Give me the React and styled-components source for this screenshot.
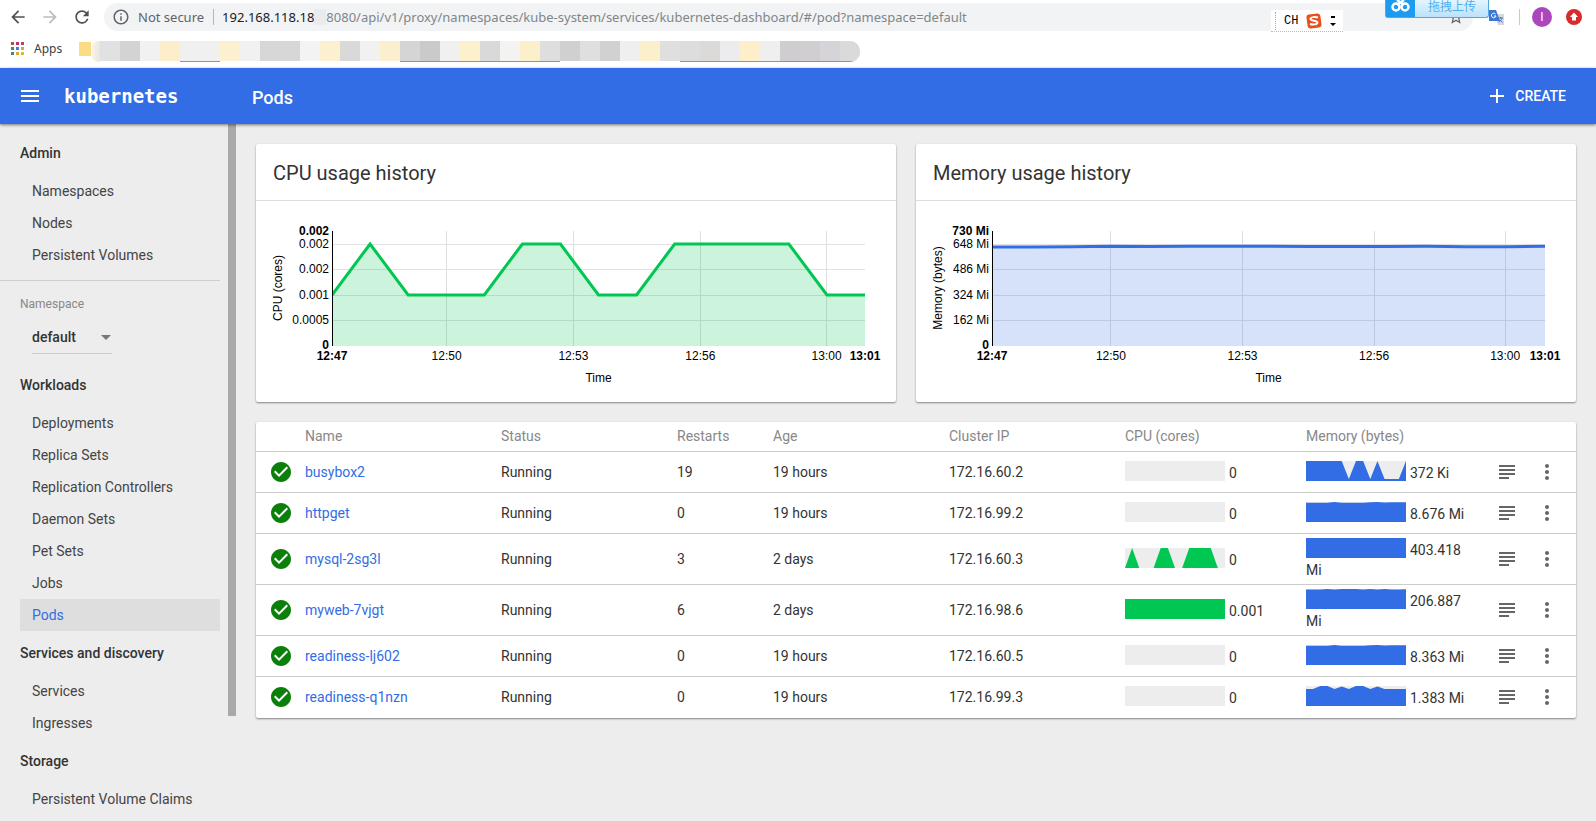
import styled, { createGlobalStyle } from "styled-components";
import {
  MdArrowBack,
  MdArrowForward,
  MdRefresh,
  MdInfoOutline,
  MdStarBorder,
  MdMenu,
  MdAdd,
  MdCheckCircle,
  MdSubject,
  MdMoreVert,
  MdArrowDropDown,
} from "react-icons/md";

/* ================= DATA ================= */
const NAV_ADMIN = ["Namespaces", "Nodes", "Persistent Volumes"];

const NAV_GROUPS = [
  {
    title: "Workloads",
    items: ["Deployments", "Replica Sets", "Replication Controllers", "Daemon Sets", "Pet Sets", "Jobs", "Pods"],
  },
  { title: "Services and discovery", items: ["Services", "Ingresses"] },
  { title: "Storage", items: ["Persistent Volume Claims"] },
];

const X_TICKS = [
  { label: "12:50", at: 21.5 },
  { label: "12:53", at: 45.3 },
  { label: "12:56", at: 69.1 },
  { label: "13:00", at: 92.8 },
];

const CPU_CHART = {
  title: "CPU usage history",
  axis: "CPU (cores)",
  color: "#00c752",
  max: "0.002",
  ticks: ["0.002", "0.002", "0.001", "0.0005"],
  values: [51, 102, 51, 51, 51, 102, 102, 51, 51, 102, 102, 102, 102, 51, 51],
};

const MEM_CHART = {
  title: "Memory usage history",
  axis: "Memory (bytes)",
  color: "#326de6",
  max: "730 Mi",
  ticks: ["648 Mi", "486 Mi", "324 Mi", "162 Mi"],
  values: [99, 99, 99.2, 99.8, 99.4, 99.8, 99.8, 99.8, 99.4, 99.6, 99.4, 99.7, 99.2, 99.2, 99.8],
};

const FULL = Array(15).fill(20);
const NONE = Array(15).fill(0);
const FLAT = [19.3, 19.3, 19.3, 19.3, 20, 19.3, 19.3, 19.3, 19.3, 19.8, 20, 19.6, 19.8, 19.8, 19.8];

const PODS = [
  { name: "busybox2", restarts: 19, age: "19 hours", ip: "172.16.60.2", cpu: "0", cpuLine: NONE, mem: "372 Ki", memLine: [20, 20, 20, 20, 20, 20, 2, 20, 20, 2, 20, 2, 2, 2, 20] },
  { name: "httpget", restarts: 0, age: "19 hours", ip: "172.16.99.2", cpu: "0", cpuLine: NONE, mem: "8.676 Mi", memLine: FLAT },
  { name: "mysql-2sg3l", restarts: 3, age: "2 days", ip: "172.16.60.3", cpu: "0", cpuLine: [0, 20, 0, 0, 0, 20, 20, 0, 0, 20, 20, 20, 20, 0, 0], mem: "403.418 Mi", memLine: FULL },
  { name: "myweb-7vjgt", restarts: 6, age: "2 days", ip: "172.16.98.6", cpu: "0.001", cpuLine: FULL, mem: "206.887 Mi", memLine: [19.6, 19.6, 19.6, 20, 19.6, 20, 20, 20, 19.6, 20, 19.6, 20, 19.6, 19.6, 19.8] },
  { name: "readiness-lj602", restarts: 0, age: "19 hours", ip: "172.16.60.5", cpu: "0", cpuLine: NONE, mem: "8.363 Mi", memLine: FLAT },
  { name: "readiness-q1nzn", restarts: 0, age: "19 hours", ip: "172.16.99.3", cpu: "0", cpuLine: NONE, mem: "1.383 Mi", memLine: [17, 17, 20, 20, 17, 19.5, 17, 20, 20, 17, 19.5, 17, 17, 17, 17] },
];

const COLUMNS = [49, 196, 176, 96, 176, 176, 181, 181, 40, 49];

const MOSAIC = [
  "#e2e1e2", "#d3d3d4", "#f1f1f1", "#fdeecb", "#f0f0f0", "#f0f0f0", "#fdf0d0", "#f1f1f1", "#d7d7d8", "#d7d7d8",
  "#f3f3f3", "#fdf0d0", "#d9d9da", "#f1f1f1", "#fcefd0", "#d6d5d6", "#cacacb", "#f0f0f0", "#fcf1cc", "#d9d9da",
  "#f3f3f1", "#fcf0cc", "#dedede", "#d0d0d0", "#e0dfe0", "#d1d1d1", "#efeff0", "#fcefcb", "#dfdfe0", "#dddddd",
  "#dcd9d9", "#ececee", "#fcefca", "#efeff0", "#cfcdcf", "#d0ced0", "#d6d4d8", "#dadadb",
];

/* ================= STYLES ================= */
const GlobalStyle = createGlobalStyle`
  * { box-sizing: border-box; }
  body { margin: 0; background: #ededed; overflow: hidden; }
  button { font: inherit; color: inherit; background: none; border: 0; padding: 0; cursor: pointer; }
`;

const Page = styled.div`
  height: 100vh;
  display: flex;
  flex-direction: column;
  font-family: Roboto, "Liberation Sans", sans-serif;
  font-size: 14px;
  line-height: 20px;
  color: #333;
`;

/* browser */
const Browser = styled.header`
  position: relative;
  flex: none;
  height: 68px;
  background: #fff;
  font-family: "Noto Sans", "Noto Sans CJK SC", sans-serif;
  font-size: 13px;
  color: #5f6368;
`;

const AddressRow = styled.div`
  display: flex;
  align-items: center;
  height: 34px;
  padding: 0 14px 0 8px;
`;

const NavButton = styled.button`
  display: flex;
  width: 32px;
  color: ${p => (p.$muted ? "#babcbe" : "#4d5156")};
`;

const Omnibox = styled.label`
  flex: 1;
  display: flex;
  align-items: center;
  gap: 8px;
  height: 28px;
  padding: 0 8px;
  border-radius: 14px;
  background: #f1f3f4;
`;

const Security = styled.span`
  padding-right: 9px;
  border-right: 1px solid #b4b7ba;
  line-height: 16px;
`;

const Url = styled.div`
  flex: 1;
  display: flex;
  align-items: center;
`;

const Host = styled.span`
  color: #202124;
`;

const Smudge = styled.span`
  width: 12px;
  height: 16px;
  background: #e9ebec;
`;

const UrlInput = styled.input`
  flex: 1;
  border: 0;
  outline: 0;
  padding: 0;
  background: none;
  font: inherit;
  color: #80868b;
`;

const Extensions = styled.div`
  display: flex;
  align-items: center;
  margin-left: 16px;
`;

const Separator = styled.span`
  width: 1px;
  height: 16px;
  margin: 0 12px 0 14px;
  background: #c8cacc;
`;

const Avatar = styled.span`
  width: 20px;
  height: 20px;
  margin-right: 14px;
  border-radius: 50%;
  background: #ab47bc;
  color: #fff;
  font-family: Roboto, sans-serif;
  font-size: 12px;
  line-height: 20px;
  text-align: center;
`;

const Bookmarks = styled.div`
  display: flex;
  align-items: center;
  height: 30px;
  padding-left: 11px;
  font-size: 12px;
  color: #3c4043;
`;

const AppsLink = styled.a`
  display: flex;
  align-items: center;
  gap: 9px;
  margin-right: 17px;
  color: inherit;
  text-decoration: none;
`;

const Folder = styled.span`
  width: 12px;
  height: 14px;
  background: #fbdc84;
`;

const Mosaic = styled.div`
  display: flex;
  height: 21px;
  margin-top: 4px;
  border-radius: 8px 10px 10px 8px;
  overflow: hidden;
  background: linear-gradient(90deg, #fdf6e2, #e2e1e2 12px);
  padding-left: 9px;
`;

const Tile = styled.span`
  width: 20px;
  background: ${p => p.$color};
  border-bottom: 1px solid ${p => (p.$line ? "#7f8fe0" : "#fff")};
`;

const ImeBar = styled.div`
  position: absolute;
  top: 10px;
  right: 253px;
  display: flex;
  align-items: center;
  gap: 8px;
  width: 72px;
  height: 22px;
  padding-left: 8px;
  background: #fff;
  border-bottom: 1px dotted #bbb;
  color: #000;
  font: 12px/20px "Liberation Mono", monospace;

  &::before {
    content: "";
    height: 18px;
    margin-left: -4px;
    border-left: 1px dotted #aaa;
  }
`;

const UploadTag = styled.div`
  position: absolute;
  top: 0;
  right: 107px;
  display: flex;
  width: 104px;
  height: 18px;
  border: 1px solid #4ea9e4;
  border-top: 0;
  border-radius: 0 0 3px 3px;
  background: linear-gradient(#e4f5ff, #b9e2fb);
  color: #4fb0ee;
  font-size: 12px;
  line-height: 14px;
`;

const UploadLogo = styled.span`
  width: 29px;
  height: 17px;
  margin-right: 13px;
  background: #1c9bf0;
`;

/* dashboard */
const AppBar = styled.header`
  position: relative;
  flex: none;
  display: flex;
  align-items: center;
  height: 56px;
  padding: 0 30px 0 18px;
  background: #326de6;
  box-shadow: 0 1px 3px rgba(0, 0, 0, 0.5);
  color: #fff;
`;

const Logo = styled.span`
  width: 188px;
  margin-left: 22px;
  font-family: "DejaVu Sans Mono", monospace;
  font-size: 19px;
  font-weight: 700;
`;

const PageTitle = styled.h1`
  flex: 1;
  margin: 0;
  padding-top: 3px;
  font-size: 18px;
  font-weight: 500;
`;

const BarButton = styled.button`
  display: flex;
  align-items: center;
  gap: 6px;
  font-weight: 500;
  text-transform: uppercase;
`;

const Body = styled.div`
  flex: 1;
  min-height: 0;
  display: flex;
`;

const Sidebar = styled.nav`
  flex: none;
  width: 228px;
  padding: 7px 8px 0 0;
  overflow: hidden;
`;

const ScrollThumb = styled.div`
  flex: none;
  width: 8px;
  height: 85%;
  background: #a9a9a9;
`;

const NavTitle = styled.h2`
  margin: 0;
  padding: 12px 20px;
  font-size: 14px;
  line-height: 20px;
  font-weight: 500;
`;

const NavItem = styled.a`
  display: block;
  margin-left: 20px;
  padding: 6px 12px;
  text-decoration: none;
  background: ${p => (p.$active ? "#dedede" : "transparent")};
  color: ${p => (p.$active ? "#326de6" : "#444")};
`;

const NamespaceBox = styled.div`
  display: flex;
  flex-direction: column;
  align-items: flex-start;
  gap: 8px;
  margin-top: 9px;
  padding: 15px 20px 9px;
  border-top: 1px solid #cfcfcf;
`;

const NamespaceLabel = styled.label`
  font-size: 12px;
  line-height: 16px;
  color: #888;
`;

const SelectWrap = styled.div`
  display: flex;
  align-items: center;
  width: 80px;
  height: 34px;
  margin-left: 12px;
  border-bottom: 1px solid #ccc;
  color: #777;

  select {
    flex: 1;
    min-width: 0;
    padding: 0;
    border: 0;
    outline: 0;
    background: none;
    appearance: none;
    font: 500 14px/20px Roboto, sans-serif;
    color: #333;
  }

  svg { flex: none; margin-right: -6px; }
`;

const Main = styled.main`
  flex: 1;
  min-width: 0;
  display: flex;
  flex-direction: column;
  gap: 20px;
  padding: 20px;
`;

const Charts = styled.div`
  display: grid;
  grid-template-columns: 32fr 33fr;
  gap: 20px;
`;

const Card = styled.section`
  min-width: 0;
  background: #fff;
  border-radius: 2px;
  box-shadow: 0 1px 2px rgba(0, 0, 0, 0.45);
`;

const CardTitle = styled.h3`
  margin: 0;
  padding: 17px 17px 15px;
  border-bottom: 1px solid #ddd;
  font-size: 20px;
  line-height: 24px;
  font-weight: 400;
`;

const Plot = styled.div`
  height: 201px;
  padding: 30px 31px 0 76px;

  > svg {
    display: block;
    width: 100%;
    height: 115px;
    overflow: visible;
    font: 12px "Liberation Sans", Arial, sans-serif;
    fill: #000;
  }
`;

const PodTable = styled.table`
  width: 100%;
  table-layout: fixed;
  border-collapse: separate;
  border-spacing: 0;

  th {
    height: 30px;
    padding: 0 0 1px;
    border-bottom: 1px solid #ccc;
    text-align: left;
    font-weight: 400;
    color: #888;
  }

  td {
    height: 41px;
    padding: 4px 8px 4px 0;
    border-bottom: 1px solid #ccc;
  }

  tr:last-child td { border-bottom-color: transparent; }
  svg { vertical-align: text-bottom; }
`;

const Col = styled.col`
  width: ${p => p.$width}px;
`;

const IconCell = styled.td`
  && { padding: 0 0 0 ${p => p.$left || 0}px; }
  color: ${p => p.$color || "#666"};
  line-height: 0;

  && svg { vertical-align: middle; }
`;

const PodLink = styled.a`
  color: #326de6;
  text-decoration: none;
`;

const SparkSvg = styled.svg`
  width: 100px;
  height: 20px;
  margin-right: 4px;
  background: #ededed;
`;

/* ================= COMPONENTS ================= */
const toPoints = (values, height) => values.map((v, i) => `${i},${height - v}`).join(" ");

function Sparkline({ values, color }) {
  return (
    <SparkSvg viewBox="0 0 14 20" preserveAspectRatio="none" aria-hidden="true">
      <polygon points={`0,20 ${toPoints(values, 20)} 14,20`} fill={color} />
    </SparkSvg>
  );
}

function HistoryChart({ chart }) {
  const line = toPoints(chart.values, 115);
  return (
    <Card>
      <CardTitle>{chart.title}</CardTitle>
      <Plot>
        <svg role="img" aria-label={chart.title}>
          {chart.ticks.map((t, i) => {
            const y = [13, 38, 64, 89][i];
            return (
              <g key={i}>
                <line x1="0" x2="100%" y1={y} y2={y} stroke="#e2e2e2" shapeRendering="crispEdges" />
                <text x="-3" y={y + 4} textAnchor="end">{t}</text>
              </g>
            );
          })}
          {X_TICKS.map(t => (
            <g key={t.label}>
              <line x1={`${t.at}%`} x2={`${t.at}%`} y1="0" y2="115" stroke="#dfdfdf" shapeRendering="crispEdges" />
              <text x={`${t.at}%`} y="129" textAnchor="middle">{t.label}</text>
            </g>
          ))}
          <svg width="100%" height="115" viewBox="0 0 14 115" preserveAspectRatio="none">
            <polygon points={`0,115 ${line} 14,115`} fill={chart.color} fillOpacity="0.2" />
            <polyline points={line} fill="none" stroke={chart.color} strokeWidth="3" vectorEffect="non-scaling-stroke" />
          </svg>
          <line x1="0" x2="0" y1="0" y2="115" stroke="#000" shapeRendering="crispEdges" />
          <g fontWeight="700">
            <text x="-3" y="4" textAnchor="end">{chart.max}</text>
            <text x="-3" y="118" textAnchor="end">0</text>
            <text x="0" y="129" textAnchor="middle">12:47</text>
            <text x="100%" y="129" textAnchor="middle">13:01</text>
          </g>
          <text x="50%" y="151" textAnchor="middle">Time</text>
          <text transform="translate(-50 57) rotate(-90)" textAnchor="middle">{chart.axis}</text>
        </svg>
      </Plot>
    </Card>
  );
}

function BrowserChrome() {
  return (
    <Browser>
      <AddressRow>
        <NavButton aria-label="Back"><MdArrowBack size={20} /></NavButton>
        <NavButton aria-label="Forward" $muted><MdArrowForward size={20} /></NavButton>
        <NavButton aria-label="Reload"><MdRefresh size={20} /></NavButton>
        <Omnibox>
          <MdInfoOutline size={18} />
          <Security>Not secure</Security>
          <Url>
            <Host>192.168.118.18</Host>
            <Smudge />
            <UrlInput
              aria-label="Address"
              defaultValue="8080/api/v1/proxy/namespaces/kube-system/services/kubernetes-dashboard/#/pod?namespace=default"
            />
          </Url>
          <MdStarBorder size={18} />
        </Omnibox>
        <Extensions>
          <svg width="16" height="16" viewBox="0 0 16 16">
            <path d="M6 5h9v11H9z" fill="#d5d8dc" />
            <path d="M9 9h5M11.500 8v1M13 9c-.5 2-2 3.500-3.500 4M10.500 10.500l3 3" fill="none" stroke="#4c74b8" />
            <path d="M0 1h7l4 11H0z" fill="#3f76d4" />
            <path d="M6.500 5A2.300 2.300 0 1 0 7 7H5" fill="none" stroke="#fff" strokeWidth="1" />
          </svg>
          <Separator />
          <Avatar>I</Avatar>
          <svg width="16" height="16" viewBox="0 0 16 16">
            <circle cx="8" cy="8" r="8" fill="#d92b2b" />
            <path d="M8 3.500 12 8h-2v3.500H6V8H4z" fill="#fff" />
          </svg>
        </Extensions>
      </AddressRow>
      <Bookmarks>
        <AppsLink href="#apps">
          <svg width="14" height="14" viewBox="0 0 14 14">
            {["#c5443b", "#b8336a", "#c5443b", "#3d8f5f", "#3f7de0", "#e0a63a", "#3d8f5f", "#e0a63a", "#e0b83a"].map((c, i) => (
              <rect key={i} x={(i % 3) * 5} y={Math.floor(i / 3) * 5} width="3" height="3" fill={c} />
            ))}
          </svg>
          Apps
        </AppsLink>
        <Folder />
        <Mosaic>
          {MOSAIC.map((c, i) => (
            <Tile key={i} $color={c} $line={(i > 3 && i < 6) || (i > 14 && i < 23) || i > 28} />
          ))}
        </Mosaic>
      </Bookmarks>
      <ImeBar>
        CH
        <svg width="16" height="16" viewBox="0 0 16 16">
          <rect x="1" y="1" width="14" height="14" rx="3" fill="#e8511d" transform="rotate(-8 8 8)" />
          <path d="M12 4.500C9 3.500 4.500 4 4.500 6s7 1.500 7 3.500-4.500 2.500-7.500 1.500" fill="none" stroke="#fff" strokeWidth="2" />
        </svg>
        <svg width="6" height="12" viewBox="0 0 6 12">
          <path d="M1 1h4v2H1zM0 8h6L3 11z" />
        </svg>
      </ImeBar>
      <UploadTag>
        <UploadLogo>
          <svg width="29" height="17" viewBox="0 0 29 17" fill="none" stroke="#fff" strokeWidth="2.500">
            <circle cx="10" cy="7" r="3.500" />
            <circle cx="19" cy="7" r="3.500" />
            <path d="M11 0l7 5M18 0l-7 5" />
          </svg>
        </UploadLogo>
        拖拽上传
      </UploadTag>
    </Browser>
  );
}

export default function App() {
  return (
    <Page>
      <GlobalStyle />
      <BrowserChrome />

      <AppBar>
        <BarButton aria-label="Menu"><MdMenu size={24} /></BarButton>
        <Logo>kubernetes</Logo>
        <PageTitle>Pods</PageTitle>
        <BarButton><MdAdd size={24} /> Create</BarButton>
      </AppBar>

      <Body>
        <Sidebar>
          <NavTitle>Admin</NavTitle>
          {NAV_ADMIN.map(item => (
            <NavItem key={item} href="#admin">{item}</NavItem>
          ))}
          <NamespaceBox>
            <NamespaceLabel htmlFor="namespace">Namespace</NamespaceLabel>
            <SelectWrap>
              <select id="namespace" defaultValue="default">
                <option>default</option>
              </select>
              <MdArrowDropDown size={24} />
            </SelectWrap>
          </NamespaceBox>
          {NAV_GROUPS.map(group => (
            <div key={group.title}>
              <NavTitle>{group.title}</NavTitle>
              {group.items.map(item => (
                <NavItem key={item} href={`#${item}`} $active={item === "Pods"}>{item}</NavItem>
              ))}
            </div>
          ))}
        </Sidebar>
        <ScrollThumb />

        <Main>
          <Charts>
            <HistoryChart chart={CPU_CHART} />
            <HistoryChart chart={MEM_CHART} />
          </Charts>

          <Card>
            <PodTable>
              <colgroup>
                {COLUMNS.map((w, i) => <Col key={i} $width={w} />)}
              </colgroup>
              <thead>
                <tr>
                  <th />
                  <th>Name</th>
                  <th>Status</th>
                  <th>Restarts</th>
                  <th>Age</th>
                  <th>Cluster IP</th>
                  <th>CPU (cores)</th>
                  <th>Memory (bytes)</th>
                  <th />
                  <th />
                </tr>
              </thead>
              <tbody>
                {PODS.map(pod => (
                  <tr key={pod.name}>
                    <IconCell $left={13} $color="#0a800a"><MdCheckCircle size={24} /></IconCell>
                    <td><PodLink href={`#${pod.name}`}>{pod.name}</PodLink></td>
                    <td>Running</td>
                    <td>{pod.restarts}</td>
                    <td>{pod.age}</td>
                    <td>{pod.ip}</td>
                    <td><Sparkline values={pod.cpuLine} color="#00c752" />{pod.cpu}</td>
                    <td><Sparkline values={pod.memLine} color="#326de6" />{pod.mem}</td>
                    <IconCell $left={8}><button aria-label="Logs"><MdSubject size={24} /></button></IconCell>
                    <IconCell $left={8}><button aria-label="Actions"><MdMoreVert size={24} /></button></IconCell>
                  </tr>
                ))}
              </tbody>
            </PodTable>
          </Card>
        </Main>
      </Body>
    </Page>
  );
}
